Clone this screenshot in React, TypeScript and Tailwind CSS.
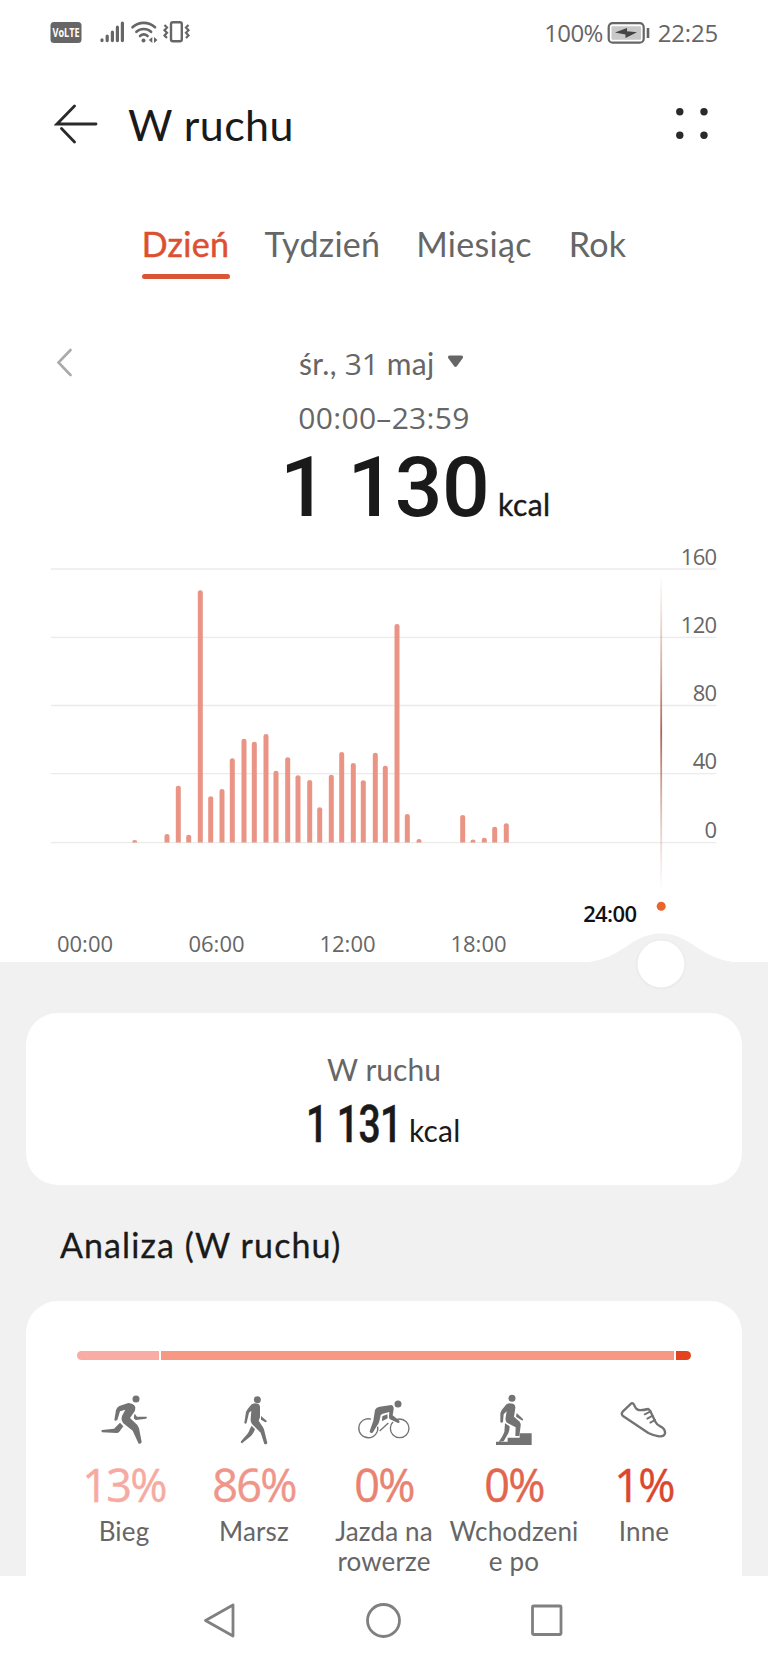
const bars = [
  [134.7, 840.5], [167, 834], [178.3, 785.7], [188.7, 834.7], [200.3, 590.3], [210.7, 796.3], [222, 789],
  [232.3, 758.3], [244, 738.7], [254.3, 741.7], [266, 734], [276, 770.7], [287.7, 757.3], [298, 775.3],
  [309.7, 780], [319.7, 807.3], [331.3, 774.7], [341.7, 752], [353.3, 763], [363.3, 780.3], [375.3, 752.7],
  [385.3, 765.7], [397, 624], [407.3, 814], [419, 839], [462.7, 815], [473, 839.5], [484.3, 837.7],
  [494.7, 826.7], [506.3, 823.3],
];

const gridLines = [
  { y: 569, label: "160" },
  { y: 637.4, label: "120" },
  { y: 705.5, label: "80" },
  { y: 773.7, label: "40" },
  { y: 842.6, label: "0" },
];

const hours = [
  { x: 85, label: "00:00" },
  { x: 216.5, label: "06:00" },
  { x: 347.5, label: "12:00" },
  { x: 478.5, label: "18:00" },
];

const tabs = [
  { label: "Dzień", width: "w-[88px]", active: true },
  { label: "Tydzień", width: "w-[116px]" },
  { label: "Miesiąc", width: "w-[117px]" },
  { label: "Rok", width: "w-[60px]" },
];

function StatusBar() {
  return (
    <div className="flex h-16 items-center justify-between pl-[50px] pr-[50px] text-[#666]">
      <svg width="144" height="24" viewBox="50 20 144 24" fill="none" stroke="#666">
        <rect x="50.5" y="22" width="31" height="21" rx="3.5" fill="#666" stroke="none" />
        <text x="52.5" y="37.3" fontSize="13" fontWeight="700" fill="#fff" stroke="none" textLength="27" lengthAdjust="spacingAndGlyphs" className="font-['Open_Sans',sans-serif]">VoLTE</text>
        <g strokeWidth="3.2" strokeLinecap="round">
          <path d="M102 40.6v-.8M107.2 40.6V36M112.4 40.6V32M117.4 40.6V27.2M122.4 40.6V23" />
        </g>
        <path d="M132.5 27.3a16.5 16.5 0 0 1 22.5 0M136.4 31.8a11 11 0 0 1 14.7 0M140 36a6 6 0 0 1 7.6 0" strokeWidth="2.6" strokeLinecap="round" />
        <circle cx="143.5" cy="40.5" r="2" fill="#666" stroke="none" />
        <path d="M152.3 37v6l-3.5-3zM154 37v6l3.5-3z" fill="#666" stroke="none" />
        <rect x="171" y="22.2" width="10.8" height="19" rx="2" strokeWidth="2.4" />
        <path d="M164.5 25l2.5 2.6-2.5 2.6 2.5 2.6-2.5 2.6 2.5 2.6M188.5 25l-2.5 2.6 2.5 2.6-2.5 2.6 2.5 2.6-2.5 2.6" strokeWidth="2.2" />
      </svg>
      <div className="flex items-center pt-px font-['Open_Sans',sans-serif] text-[24px] leading-none">
        <span className="tracking-[-0.6px]">100%</span>
        <svg className="ml-[3px]" width="44" height="24" viewBox="605 20 44 24" fill="none">
          <rect x="607.7" y="22.2" width="35" height="19.5" rx="4" stroke="#666" strokeWidth="2.2" />
          <rect x="610.5" y="25.2" width="29.5" height="13.5" rx="1" fill="#c8c8c8" />
          <path d="M614 31.5l12-4.5v3.2l10 1-11.5 5.8v-3.6z" fill="#444" />
          <path d="M647 27v10" stroke="#666" strokeWidth="2.6" />
        </svg>
        <span className="ml-2 tracking-[-0.2px]">22:25</span>
      </div>
    </div>
  );
}

function Header() {
  return (
    <header className="flex h-[121px] items-center pl-[54px] pr-[60px]">
      <svg width="44" height="44" viewBox="0 0 44 44" fill="none" stroke="#2a2a2a" strokeWidth="2.8" strokeLinecap="round">
        <path d="M20.5 3L3 21H42M7.5 25.5L20.5 39" />
      </svg>
      <h1 className="ml-[30px] grow text-[43px] leading-none tracking-[0.4px] text-[#1a1a1a]">W ruchu</h1>
      <svg width="32" height="36" viewBox="0 0 32 36" fill="#2a2a2a">
        <circle cx="3.8" cy="4.8" r="3.7" />
        <circle cx="28" cy="4.8" r="3.7" />
        <circle cx="3.8" cy="28.2" r="3.7" />
        <circle cx="28" cy="28.2" r="3.7" />
      </svg>
    </header>
  );
}

function Chart() {
  return (
    <svg className="relative block overflow-visible font-['Open_Sans',sans-serif]" width="768" height="432" viewBox="0 530 768 432">
      <defs>
        <linearGradient id="cursor" x1="0" y1="0" x2="0" y2="1">
          <stop offset="0" stopColor="#c98a78" stopOpacity="0" />
          <stop offset="0.5" stopColor="#ab6550" />
          <stop offset="1" stopColor="#d09a8c" stopOpacity="0" />
        </linearGradient>
        <radialGradient id="knob">
          <stop offset="0.88" stopColor="#e8e8e8" />
          <stop offset="1" stopColor="#f1f1f1" />
        </radialGradient>
      </defs>
      {gridLines.map((g) => (
        <g key={g.label}>
          <path d={`M51 ${g.y}H716.5`} stroke="#ebebeb" strokeWidth="1.3" />
          <text x="716.5" y={g.y - 4.5} fontSize="22" fill="#666" textAnchor="end" letterSpacing="-0.7">{g.label}</text>
        </g>
      ))}
      {bars.map(([x, top]) => (
        <path key={x} d={`M${x - 2.5} 842.6V${Math.min(top + 2, 842)}q0 -2 2.5 -2t2.5 2V842.6z`} fill="#e99484" />
      ))}
      <rect x="660.3" y="573" width="1.8" height="320" fill="url(#cursor)" />
      <circle cx="661.2" cy="906.3" r="4.5" fill="#e8652b" />
      <text x="609.8" y="922" fontSize="22" fontWeight="600" fill="#111" textAnchor="middle" letterSpacing="-0.6">24:00</text>
      {hours.map((h) => (
        <text key={h.label} x={h.x} y="951.8" fontSize="22" fill="#666" textAnchor="middle">{h.label}</text>
      ))}
      <path d="M582 962.5C622 961 630 933.5 661 933.5S700 961 740 962.5z" fill="#f1f1f1" />
      <circle cx="661" cy="964.5" r="26" fill="url(#knob)" />
      <circle cx="661" cy="964" r="23.5" fill="#fff" />
    </svg>
  );
}

const activities = [
  {
    name: "Bieg",
    percent: "13%",
    color: "text-[#f6aaa0]",
    icon: (
      <svg width="48" height="52" viewBox="120 192 144 156" fill="#737373">
        <circle cx="228" cy="207" r="10.5" />
        <path d="M163 270L168 240Q170 233 178 228L205 219Q222 220 226 232L225 242L210 264L232 285Q235 290 237 295L245 336Q244 343 236 341L218 302L190 280Q182 270 186 258L196 239L180 244L172 270Q166 275 163 270Z" />
        <path d="M224 251L231 260L260 260Q262 264 258 266L228 270Q220 268 222 258Z" />
        <path d="M180 278L190 289L178 305Q175 309 170 309L126 307Q122 303 126 300L162 296Z" />
      </svg>
    ),
  },
  {
    name: "Marsz",
    percent: "86%",
    color: "text-[#f0958a]",
    icon: (
      <svg width="48" height="52" viewBox="510 192 144 156" fill="#737373">
        <circle cx="592" cy="209" r="10.5" />
        <path d="M553 278L558 246Q561 238 568 231Q574 221 584 220Q598 220 600 230L600 262L596 272L608 290Q612 296 613 302L622 339Q620 345 613 342L602 308L576 282Q571 275 572 266L574 242L567 248L560 278Q556 284 553 278Z" />
        <path d="M603 258L620 272Q621 277 616 277L603 269Z" />
        <path d="M575 287L585 298Q580 312 573 318L546 340Q540 339 543 334L562 312Q567 305 570 296Z" />
      </svg>
    ),
  },
  {
    name: "Jazda na rowerze",
    percent: "0%",
    color: "text-[#ea8271]",
    icon: (
      <svg width="48" height="52" viewBox="-32 192 144 156" fill="#737373" className="overflow-visible">
        <g fill="none" stroke="#737373" strokeWidth="4">
          <path d="M1 267.5A28.5 28.5 0 1 0 21 290" />
          <circle cx="87" cy="295" r="28" />
          <path d="M27 303L53 279" />
        </g>
        <path d="M56 258L90 276L86 285L54 270Z" fill="#fff" />
        <circle cx="82" cy="222" r="10.5" />
        <path d="M13 240Q17 231 27 230L62 225Q70 227 69 238L66 256L86 272Q89 278 82 279L58 268Q54 265 55 258L56 246L36 251L30 255Q26 280 20 286L6 308Q-2 311 -3 304L8 272Z" />
        <path d="M35 259L50 253L51 265L34 274Z" />
      </svg>
    ),
  },
  {
    name: "Wchodzeni e po",
    percent: "0%",
    color: "text-[#e2654e]",
    icon: (
      <svg width="48" height="52" viewBox="357 192 144 156" fill="#737373">
        <circle cx="423" cy="205" r="10.5" />
        <path d="M388 276L388 250Q390 240 402 228Q406 221 415 220L426 221Q434 224 433 234L429 260L446 275Q450 280 449 287L445 318L433 318L434 292L408 278Q402 272 404 262L407 244L398 253L396 276Q391 281 388 276Z" />
        <path d="M437 249L456 267Q458 272 452 271L435 260Z" />
        <path d="M402 280L416 289Q416 300 412 310L398 334L383 336Q395 320 400 306Z" />
        <path d="M375 335H410V323H446V310H482V345H375Z" />
      </svg>
    ),
  },
  {
    name: "Inne",
    percent: "1%",
    color: "text-[#dc452e]",
    icon: (
      <svg width="48" height="52" viewBox="747 192 144 156" fill="none" stroke="#737373" strokeWidth="7" strokeLinejoin="round" strokeLinecap="round">
        <path d="M755 245L781 220Q786 218 789 224Q794 238 803 240Q812 242 832 237Q838 240 842 252L854 277Q858 285 868 289Q884 297 882 311Q878 321 864 319Q846 316 832 309L757 259Q749 252 755 245Z" />
        <path d="M821 253L839 244M829 266L845 257M838 278L852 270" strokeWidth="5.5" />
      </svg>
    ),
  },
];

export default function App() {
  return (
    <div className="h-[1664px] w-[768px] overflow-hidden bg-white font-[Lato,sans-serif]">
      <StatusBar />
      <Header />

      <nav className="flex h-[145px] justify-center gap-[35px] pl-px pt-[42px] text-[34px] leading-none tracking-[0.3px] text-[#666]">
        {tabs.map((t) => (
          <div key={t.label} className={`${t.width} flex flex-col items-center whitespace-nowrap`}>
            <span className={t.active ? "text-[#dc5031] [-webkit-text-stroke:0.5px_#dc5031]" : ""}>{t.label}</span>
            {t.active && <div className="mt-[13px] h-[5px] w-full rounded-full bg-[#dc5436]" />}
          </div>
        ))}
      </nav>

      <div className="flex h-[66px] items-center pl-[56px] text-[30px] leading-none text-[#666]">
        <svg width="16" height="30" viewBox="0 0 16 30" fill="none" stroke="#aaa" strokeWidth="2.6" strokeLinecap="round">
          <path d="M14.5 2L2.5 14.5L14.5 27" />
        </svg>
        <div className="ml-[227px] w-[137px] whitespace-nowrap tracking-[0.3px]">
          śr., <span className="font-['Open_Sans',sans-serif] tracking-[-0.2px]">31</span> maj
        </div>
        <svg className="ml-[11px] mb-1" width="17" height="13" viewBox="0 0 16 13" fill="#666">
          <path d="M2 0.5H14Q16.5 1 15 3.5L9.5 11Q8 12.8 6.5 11L1 3.5Q-0.5 1 2 0.5Z" />
        </svg>
      </div>
      <div className="flex h-[43px] items-center justify-center pt-px font-['Open_Sans',sans-serif] text-[30px] leading-none tracking-[0.3px] text-[#666]">00:00–23:59</div>
      <div className="flex h-[91px] items-baseline pl-[280px] pt-[7px] leading-none text-[#1a1a1a]">
        <span className="w-[208px] whitespace-nowrap font-[Roboto,sans-serif] text-[84px] font-medium tracking-[-0.5px]">1 130</span>
        <span className="ml-[10px] text-[30px] tracking-[0.5px] [-webkit-text-stroke:0.4px_#1a1a1a]">kcal</span>
      </div>

      <Chart />

      <main className="h-[614px] overflow-hidden bg-[#f1f1f1] px-[26px] pt-[51px]">
        <section className="flex h-[172px] flex-col items-center rounded-[32px] bg-white pt-[41px] leading-none">
          <div className="text-[30px] text-[#666]">W ruchu</div>
          <div className="mt-[15px] flex w-[156px] items-baseline text-[#1a1a1a]">
            <span className="w-[98px] origin-left scale-x-[0.75] whitespace-nowrap font-[Roboto,sans-serif] text-[52px] font-medium tracking-[-0.7px] [-webkit-text-stroke:0.5px_#1a1a1a]">1 131</span>
            <span className="ml-[5px] text-[30px] tracking-[0.2px]">kcal</span>
          </div>
        </section>

        <h2 className="mt-[43px] pl-[34px] text-[34px] leading-none tracking-[1.1px] text-[#1a1a1a] [-webkit-text-stroke:0.3px_#1a1a1a]">Analiza (W ruchu)</h2>

        <section className="mt-[39px] h-[320px] rounded-t-[32px] bg-white pt-[50px]">
          <div className="mx-[51px] flex h-[9px] gap-[2px] overflow-hidden rounded-full">
            <div className="w-[82px] bg-[#f8aca3]" />
            <div className="grow bg-[#f69883]" />
            <div className="w-[15px] bg-[#e5431f]" />
          </div>
          <div className="mx-[33px] mt-[34px] grid grid-cols-5">
            {activities.map((a) => (
              <div key={a.name} className="flex flex-col items-center">
                {a.icon}
                <div className={`mt-4 font-['Open_Sans',sans-serif] text-[45px] leading-none tracking-[-1.7px] [-webkit-text-stroke:0.4px_currentColor] ${a.color}`}>{a.percent}</div>
                <div className="mt-[9px] w-[130px] text-center text-[26px] leading-[30px] tracking-[0.15px] text-[#666]">{a.name}</div>
              </div>
            ))}
          </div>
        </section>
      </main>

      <footer className="flex h-[88px] items-center bg-white pl-[203px]">
        <svg width="360" height="40" viewBox="0 0 360 40" fill="none" stroke="#808080" strokeWidth="2.8" strokeLinejoin="round">
          <path d="M2.5 20.5L30 5V36Z" />
          <circle cx="180.5" cy="20.5" r="16" />
          <rect x="329.5" y="6" width="28.5" height="28.5" rx="1" />
        </svg>
      </footer>
    </div>
  );
}
